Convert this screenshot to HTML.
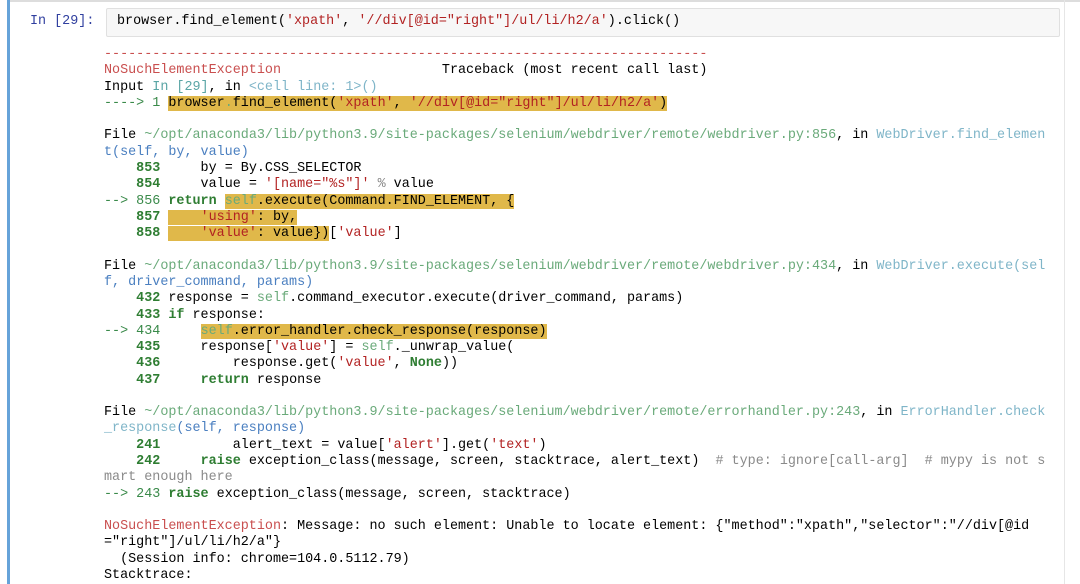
<!DOCTYPE html>
<html><head><meta charset="utf-8"><style>
html,body{margin:0;padding:0;background:#fff;width:1080px;height:584px;overflow:hidden}
.bar{position:absolute;left:7px;top:0;width:3px;height:584px;background:#66a3d9}
.top{position:absolute;left:7px;top:0;width:1073px;height:2px;background:#ddd}
.rb{position:absolute;left:1064px;top:0;width:1px;height:584px;background:#e6e6e6}
.prompt{position:absolute;left:30px;top:12px;font:13.42px/20px "Liberation Mono",monospace;color:#303f9f}
.inbox{position:absolute;left:106px;top:8px;width:954px;height:29px;background:#f7f7f7;border:1px solid #e0e0e0;border-radius:2px;box-sizing:border-box}
.incode{position:absolute;left:117px;top:12px;font:13.42px/20px "Liberation Mono",monospace;color:#000;white-space:pre}
pre{position:absolute;left:104px;top:47px;margin:0;font:13.42px/16.28px "Liberation Mono",monospace;color:#000;white-space:pre}
.r{color:#c94f4f}.g{color:#2e7d32;font-weight:bold}.gn{color:#3a8a4a}.c{color:#5aa5a5}.b{color:#4a7fc0}.s{color:#b22222}.cm{color:#8a8a8a}.k{color:#2e7d32;font-weight:bold}.p{color:#6aaa7a}
.h{background:#e0b84a}.i{color:#7fb5c8}
</style></head><body>
<div class="top"></div><div class="bar"></div><div class="rb"></div>
<div class="prompt">In [29]:</div>
<div class="inbox"></div>
<div class="incode">browser.find_element(<span class="s">'xpath'</span>, <span class="s">'//div[@id="right"]/ul/li/h2/a'</span>).click()</div>
<pre><span class="r">---------------------------------------------------------------------------</span>
<span class="r">NoSuchElementException</span>                    Traceback (most recent call last)
Input <span class="c">In [29]</span>, in <span class="i">&lt;cell line: 1&gt;()</span>
<span class="gn">----&gt; 1</span> <span class="h">browser<span class="p">.</span>find_element(<span class="s">'xpath'</span>, <span class="s">'//div[@id="right"]/ul/li/h2/a'</span>)</span>

File <span class="p">~/opt/anaconda3/lib/python3.9/site-packages/selenium/webdriver/remote/webdriver.py:856</span>, in <span class="i">WebDriver.find_elemen</span>
<span class="b">t(self, by, value)</span>
<span class="g">    853</span>     by = By.CSS_SELECTOR
<span class="g">    854</span>     value = <span class="s">'[name="%s"]'</span> <span class="cm">%</span> value
<span class="gn">--&gt; 856</span> <span class="k">return</span> <span class="h"><span class="p">self</span>.execute(Command.FIND_ELEMENT, {</span>
<span class="g">    857</span> <span class="h">    <span class="s">'using'</span>: by,</span>
<span class="g">    858</span> <span class="h">    <span class="s">'value'</span>: value})</span>[<span class="s">'value'</span>]

File <span class="p">~/opt/anaconda3/lib/python3.9/site-packages/selenium/webdriver/remote/webdriver.py:434</span>, in <span class="i">WebDriver.execute(sel</span>
<span class="b">f, driver_command, params)</span>
<span class="g">    432</span> response = <span class="p">self</span>.command_executor.execute(driver_command, params)
<span class="g">    433</span> <span class="k">if</span> response:
<span class="gn">--&gt; 434</span>     <span class="h"><span class="p">self</span>.error_handler.check_response(response)</span>
<span class="g">    435</span>     response[<span class="s">'value'</span>] = <span class="p">self</span>._unwrap_value(
<span class="g">    436</span>         response.get(<span class="s">'value'</span>, <span class="k">None</span>))
<span class="g">    437</span>     <span class="k">return</span> response

File <span class="p">~/opt/anaconda3/lib/python3.9/site-packages/selenium/webdriver/remote/errorhandler.py:243</span>, in <span class="i">ErrorHandler.check</span>
<span class="i">_response</span><span class="b">(self, response)</span>
<span class="g">    241</span>         alert_text = value[<span class="s">'alert'</span>].get(<span class="s">'text'</span>)
<span class="g">    242</span>     <span class="k">raise</span> exception_class(message, screen, stacktrace, alert_text)  <span class="cm"># type: ignore[call-arg]  # mypy is not s</span>
<span class="cm">mart enough here</span>
<span class="gn">--&gt; 243</span> <span class="k">raise</span> exception_class(message, screen, stacktrace)

<span class="r">NoSuchElementException</span>: Message: no such element: Unable to locate element: {"method":"xpath","selector":"//div[@id
="right"]/ul/li/h2/a"}
  (Session info: chrome=104.0.5112.79)
Stacktrace:</pre>
</body></html>
